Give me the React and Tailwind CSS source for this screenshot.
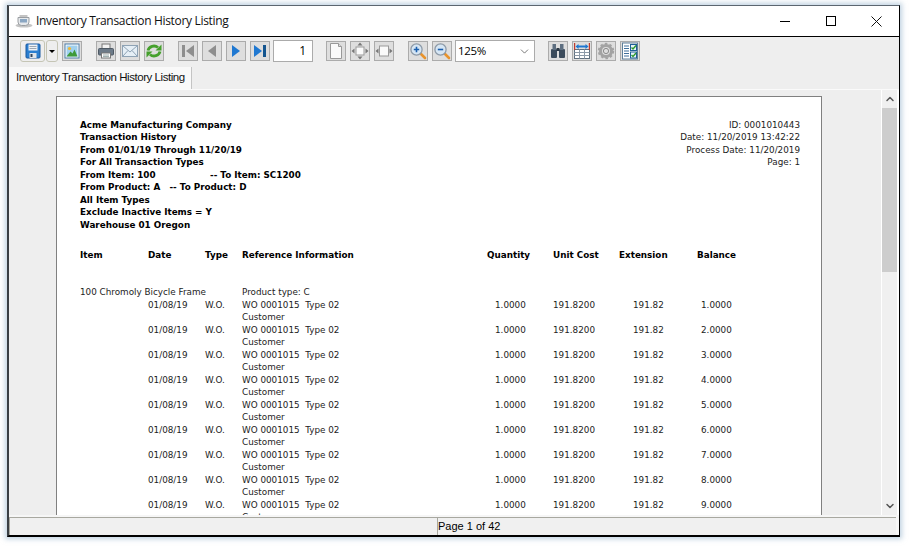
import { ChevronDown, ChevronUp } from "lucide-react";

const rows = ["1.0000", "2.0000", "3.0000", "4.0000", "5.0000", "6.0000", "7.0000", "8.0000", "9.0000", "10.0000"];

function Btn({ children, className = "" }) {
  return (
    <div className={"w-5 h-5 border border-[#ababab] bg-[#dedede] flex items-center justify-center shrink-0 " + className}>
      {children}
    </div>
  );
}

const Ico = ({ children }) => (
  <svg width="18" height="18" viewBox="0 0 18 18">
    {children}
  </svg>
);

const Magnifier = ({ plus }) => (
  <Ico>
    <path d="M11 11l5 5" stroke="#e8932c" strokeWidth="2.6" strokeLinecap="round" />
    <circle cx="7.5" cy="7.5" r="5.6" fill="#d6e6f4" stroke="#8d9aa8" strokeWidth="1.3" />
    <path d={plus ? "M4.8 7.5h5.4M7.5 4.8v5.4" : "M4.8 7.5h5.4"} stroke="#1b5fae" strokeWidth="1.6" />
  </Ico>
);

export default function App() {
  return (
    <div className="w-[911px] h-[547px] bg-white pt-[5px] pl-[7px] overflow-hidden font-['Liberation_Sans',sans-serif]">
      <div className="w-[893px] h-[532px] flex flex-col bg-white border-t border-t-[#5c6670] border-l-2 border-l-[#3a3f44] border-r border-r-black border-b-2 border-b-black shadow-[0_0_5px_2px_rgba(150,180,205,0.6)]">
        {/* title bar */}
        <div className="h-[30px] flex items-center shrink-0">
          <svg width="18" height="14" viewBox="0 0 18 14" className="ml-[6px]">
            <ellipse cx="9" cy="11.500" rx="8.500" ry="2" fill="#c4c4c4" />
            <path d="M3 3.500h11v4.500a3.500 3.500 0 0 1-3.500 3.500h-4a3.500 3.500 0 0 1-3.500-3.500z" fill="#e6e9ec" stroke="#9a9ea2" />
            <rect x="5" y="5" width="7" height="3.500" fill="#8aa6c2" />
            <path d="M4.500 2h8" stroke="#b5b5b5" strokeWidth="1.600" />
          </svg>
          <span className="ml-[3px] text-[12px] text-[#111] font-['Open_Sans',sans-serif] tracking-[-0.32px] whitespace-nowrap">
            Inventory Transaction History Listing
          </span>
          <div className="ml-auto flex items-center">
            <div className="w-[46px] flex justify-center">
              <div className="w-[10px] h-px bg-black" />
            </div>
            <div className="w-[46px] flex justify-center">
              <div className="w-[10px] h-[10px] border border-black" />
            </div>
            <div className="w-[45px] flex justify-center">
              <svg width="11" height="11" viewBox="0 0 11 11">
                <path d="M.5.5l10 10M10.5.5l-10 10" stroke="#111" strokeWidth="1" />
              </svg>
            </div>
          </div>
        </div>
        <div className="h-px bg-black shrink-0" />

        {/* toolbar */}
        <div className="h-[30px] bg-[#eeeeee] flex items-center pl-[11px] pb-[2px] shrink-0">
          <div className="w-[25px] h-[22px] border border-[#c5c5b5] rounded-[3px] flex items-center justify-center">
            <svg width="16" height="16" viewBox="0 0 16 16">
              <rect x="1" y="1" width="14" height="14" rx="1" fill="#2a7fd0" stroke="#1b5aa0" />
              <rect x="3.5" y="1.5" width="9" height="6" fill="#eef2f5" />
              <path d="M4.5 3.5h7M4.5 5.5h7" stroke="#9aa7b3" />
              <rect x="4.5" y="10" width="7" height="5" fill="#dfe5ea" />
              <rect x="5.5" y="11" width="2" height="3" fill="#33475c" />
            </svg>
          </div>
          <div className="w-3 h-[22px] ml-px border border-[#c5c5b5] rounded-[3px] flex items-center justify-center">
            <div className="w-0 h-0 border-x-[3px] border-x-transparent border-t-[3px] border-t-black" />
          </div>
          <Btn className="ml-[4px]">
            <svg width="16" height="16" viewBox="0 0 16 16">
              <rect x="1" y="1" width="14" height="14" fill="#fff" stroke="#4d7ca8" />
              <rect x="2.5" y="2.5" width="11" height="11" fill="#9fd0ee" />
              <circle cx="5.5" cy="5.5" r="1.6" fill="#f2b632" />
              <path d="M2.5 13.5l4-5 2 2 2-4 3 7z" fill="#3f9a3a" />
            </svg>
          </Btn>

          <Btn className="ml-[14px]">
            <Ico>
              <rect x="5" y="2" width="8" height="5" fill="#f2f2f2" stroke="#777" />
              <rect x="1.5" y="6.5" width="15" height="6.5" rx="1" fill="#6c7a88" stroke="#4e5964" />
              <rect x="4.5" y="11" width="9" height="5" fill="#fff" stroke="#777" />
              <path d="M6 13h6M6 14.6h6" stroke="#9aa" />
            </Ico>
          </Btn>
          <Btn className="ml-1">
            <Ico>
              <rect x="1.5" y="3.5" width="15" height="11" fill="#e6eff6" stroke="#8fa3b5" />
              <path d="M1.5 3.5L9 10l7.5-6.5M1.5 14.5L7 8.5M16.5 14.5L11 8.5" fill="none" stroke="#8fa3b5" />
            </Ico>
          </Btn>
          <Btn className="ml-1">
            <Ico>
              <path d="M3 8.500a6 5.500 0 0 1 10-3" fill="none" stroke="#45a02c" strokeWidth="2.800" />
              <path d="M16.500 2.500v6h-6z" fill="#45a02c" />
              <path d="M15 9.500a6 5.500 0 0 1-10 3" fill="none" stroke="#45a02c" strokeWidth="2.800" />
              <path d="M1.500 15.500v-6h6z" fill="#45a02c" />
            </Ico>
          </Btn>

          <Btn className="ml-[14px]">
            <Ico>
              <rect x="3" y="3" width="3" height="12" fill="#8e8e8e" />
              <path d="M15 3v12L7 9z" fill="#8e8e8e" />
            </Ico>
          </Btn>
          <Btn className="ml-1">
            <Ico>
              <path d="M13 3v12L5 9z" fill="#8e8e8e" />
            </Ico>
          </Btn>
          <Btn className="ml-1">
            <Ico>
              <path d="M5 3v12l8-6z" fill="#1f78d1" />
            </Ico>
          </Btn>
          <Btn className="ml-1">
            <Ico>
              <path d="M3 3v12l8-6z" fill="#1f78d1" />
              <rect x="12" y="3" width="3" height="12" fill="#14558f" />
            </Ico>
          </Btn>
          <div className="w-10 h-[22px] ml-[3px] border border-[#ababab] bg-white flex items-center justify-end pr-[6px] text-[12px] text-black font-['Open_Sans',sans-serif]">
            1
          </div>

          <Btn className="ml-[13px]">
            <Ico>
              <path d="M3.500 1.500h8l3 3v12h-11z" fill="#fafafa" stroke="#999" />
              <path d="M11.500 1.500v3h3" fill="#ddd" stroke="#999" />
            </Ico>
          </Btn>
          <Btn className="ml-1">
            <Ico>
              <rect x="5" y="5" width="8" height="8" fill="#fafafa" stroke="#999" />
              <path d="M9 0.500l2.500 3h-5zM9 17.500l2.500-3h-5zM0.500 9l3-2.500v5zM17.500 9l-3-2.500v5z" fill="#777" />
            </Ico>
          </Btn>
          <Btn className="ml-1">
            <Ico>
              <rect x="4.500" y="4" width="9" height="10" fill="#fafafa" stroke="#999" />
              <path d="M0.500 9l3-2.500v5zM17.500 9l-3-2.500v5z" fill="#777" />
            </Ico>
          </Btn>

          <Btn className="ml-[14px]">
            <Magnifier plus />
          </Btn>
          <Btn className="ml-1">
            <Magnifier />
          </Btn>
          <div className="w-20 h-[22px] ml-[3px] border border-[#ababab] bg-white flex items-center pl-[2px] text-[11.5px] text-black font-['Open_Sans',sans-serif] tracking-[-0.3px]">
            125%
            <ChevronDown size={13} strokeWidth={1.2} className="ml-auto mr-[3px] text-[#333]" />
          </div>

          <Btn className="ml-[13px]">
            <Ico>
              <rect x="2" y="7" width="6" height="9" rx="1" fill="#3b4b5c" />
              <rect x="10" y="7" width="6" height="9" rx="1" fill="#3b4b5c" />
              <rect x="3.500" y="2" width="3.500" height="6" fill="#5d6e80" />
              <rect x="11" y="2" width="3.500" height="6" fill="#5d6e80" />
              <rect x="7.500" y="6" width="3" height="3" fill="#2b3946" />
            </Ico>
          </Btn>
          <Btn className="ml-1">
            <Ico>
              <rect x="1.500" y="7.500" width="15" height="9" fill="#fff" stroke="#5f6f7e" />
              <path d="M1.500 10.500h15M1.500 13.500h15M6.500 7.500v9M11.500 7.500v9" stroke="#8c9aa8" />
              <rect x="1" y="1" width="1.200" height="7" fill="#c0392b" />
              <rect x="15.800" y="1" width="1.200" height="7" fill="#c0392b" />
              <path d="M2.500 4.500l3-2.500v1.500h7V2l3 2.500-3 2.500V5.500h-7V7z" fill="#1f78d1" />
            </Ico>
          </Btn>
          <Btn className="ml-1">
            <Ico>
              <circle cx="9" cy="9" r="5.500" fill="none" stroke="#a3a3a3" strokeWidth="3" />
              <circle cx="9" cy="9" r="7.200" fill="none" stroke="#a3a3a3" strokeWidth="2" strokeDasharray="2.500 2.150" />
              <circle cx="9" cy="9" r="2.600" fill="#dedede" stroke="#8a8a8a" />
            </Ico>
          </Btn>
          <Btn className="ml-1">
            <Ico>
              <rect x="1.500" y="1" width="15" height="16" fill="#fff" stroke="#5f7f99" />
              <path d="M3 4h5M3 6.500h5M3 9h5M3 11.500h5M3 14h5" stroke="#3f6f9b" />
              <rect x="9.500" y="2.500" width="6" height="6" fill="#e8f3fa" stroke="#1f5f96" />
              <rect x="9.500" y="10" width="6" height="6" fill="#e8f3fa" stroke="#1f5f96" />
              <path d="M10.500 5.500l1.500 1.500 3-3.500M10.500 13l1.500 1.500 3-3.500" fill="none" stroke="#2f9a2f" strokeWidth="1.400" />
            </Ico>
          </Btn>
        </div>

        {/* tab row */}
        <div className="h-[22px] bg-[#eeeeee] flex items-end shrink-0">
          <div className="w-[183px] h-[22px] bg-[#f9f9f9] border-r border-r-[#c4c4c4] pl-[7px] flex items-center text-[11.5px] text-[#111] tracking-[-0.45px] whitespace-nowrap">
            Inventory Transaction History Listing
          </div>
        </div>
        <div className="h-px bg-[#fafafa] shrink-0" />

        {/* report area */}
        <div className="flex-1 min-h-0 flex overflow-hidden bg-[#eeeeee]">
          <div className="w-[872px] pl-[47px] pt-[6px] overflow-hidden">
            <div className="w-[766px] min-h-[600px] bg-white border border-[#808080] pl-[23px] pr-[21px] pt-[21.5px] text-[8.8px] leading-[12.5px] text-[#222] font-['DejaVu_Sans',sans-serif]">
              <div className="flex justify-between">
                <div className="font-bold text-black">
                  <div>Acme Manufacturing Company</div>
                  <div>Transaction History</div>
                  <div>From 01/01/19 Through 11/20/19</div>
                  <div>For All Transaction Types</div>
                  <div className="flex">
                    <span className="w-[130px]">From Item: 100</span>
                    <span>-- To Item: SC1200</span>
                  </div>
                  <div>From Product: A &nbsp; -- To Product: D</div>
                  <div>All Item Types</div>
                  <div>Exclude Inactive Items = Y</div>
                  <div>Warehouse 01 Oregon</div>
                </div>
                <div className="text-right">
                  <div>ID: 0001010443</div>
                  <div>Date: 11/20/2019 13:42:22</div>
                  <div>Process Date: 11/20/2019</div>
                  <div>Page: 1</div>
                </div>
              </div>

              <div className="mt-[18px] grid grid-cols-[68px_57px_37px_245px_66px_66px_78px_1fr] font-bold text-black">
                <span>Item</span>
                <span>Date</span>
                <span>Type</span>
                <span>Reference Information</span>
                <span>Quantity</span>
                <span>Unit Cost</span>
                <span>Extension</span>
                <span>Balance</span>
              </div>

              <div className="mt-[24.5px] flex">
                <span className="w-[162px]">100 Chromoly Bicycle Frame</span>
                <span>Product type: C</span>
              </div>

              {rows.map((bal) => (
                <div key={bal} className="grid grid-cols-[68px_57px_37px_253px_58px_80px_68px_1fr]">
                  <span />
                  <span>01/08/19</span>
                  <span>W.O.</span>
                  <span>WO 0001015 &nbsp;Type 02</span>
                  <span>1.0000</span>
                  <span>191.8200</span>
                  <span>191.82</span>
                  <span>{bal}</span>
                  <span className="col-start-4">Customer</span>
                </div>
              ))}
            </div>
          </div>

          {/* scrollbar */}
          <div className="w-[18px] flex flex-col bg-white pl-px pr-[2px]">
            <div className="h-[18px] bg-[#f0f0f0] flex items-center justify-center">
              <ChevronUp size={12} strokeWidth={3} className="text-[#555]" />
            </div>
            <div className="flex-1 bg-[#f0f0f0]">
              <div className="h-[164px] bg-[#cdcdcd]" />
            </div>
            <div className="h-[18px] bg-[#f0f0f0] flex items-center justify-center">
              <ChevronDown size={12} strokeWidth={3} className="text-[#555]" />
            </div>
          </div>
        </div>

        {/* status bar */}
        <div className="h-[20px] pt-[2px] pr-[3px] bg-[#f6f6f6] flex shrink-0">
          <div className="w-[428px] bg-[#f0f0f0] border-t border-l border-[#a8a8a0]" />
          <div className="flex-1 bg-[#f0f0f0] border-t border-l border-[#a8a8a0] flex items-center text-[11px] text-black">
            Page 1 of 42
          </div>
        </div>
      </div>
    </div>
  );
}
